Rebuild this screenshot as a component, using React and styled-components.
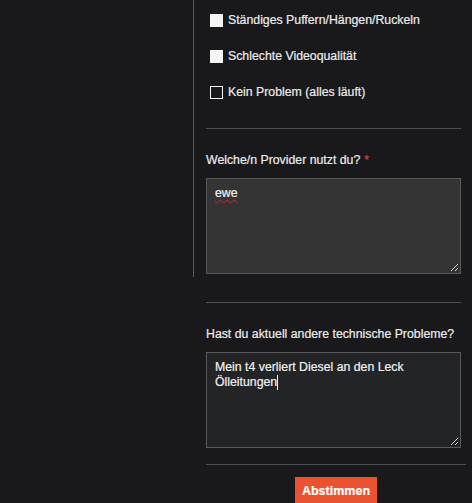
import React from "react"
import styled, { createGlobalStyle } from "styled-components"

const Global = createGlobalStyle`
  html, body {
    margin: 0;
    padding: 0;
    background: #19191b;
    height: 100%;
    overflow: hidden;
  }
  body {
    font-family: "Liberation Sans", Arial, sans-serif;
    font-size: 12.3px;
    color: #ececec;
    -webkit-text-stroke: 0.2px currentColor;
  }
`

const Page = styled.div`
  display: flex;
  align-items: flex-start;
  min-height: 503px;
`
const Sidebar = styled.div`
  width: 194px;
  height: 277px;
  box-sizing: border-box;
  border-right: 1px solid #5c5c5e;
  flex-shrink: 0;
`
const Main = styled.form`
  flex: 1;
  padding: 0 11px 0 12px;
  display: flex;
  flex-direction: column;
`
const Options = styled.div`
  padding-top: 2px;
  display: flex;
  flex-direction: column;
`
const Option = styled.label`
  display: flex;
  align-items: center;
  height: 36px;
  gap: 5px;
  padding-left: 4px;
  line-height: 15px;
`
const Box = styled.span`
  width: 13px;
  height: 13px;
  box-sizing: border-box;
  background: ${p => (p.checked ? "#f4f4f4" : "transparent")};
  border: 1px solid #f4f4f4;
  flex-shrink: 0;
`
const Divider = styled.hr`
  border: 0;
  height: 1px;
  background: #4e4e50;
  margin: ${p => p.top || 0}px ${p => p.right || 0}px 0 0;
`
const Label = styled.div`
  margin-top: 24px;
  line-height: 14px;
  white-space: nowrap;
`
const Star = styled.span`
  color: #d8473b;
  margin-left: 4px;
`
const Field = styled.div`
  position: relative;
  margin-top: 11px;
  height: 96px;
  box-sizing: border-box;
  border: 1px solid #59595b;
  background: ${p => (p.focused ? "#222426" : "#343434")};
  padding: 7px 8px;
  line-height: 15px;
  color: #f2f2f2;
`
const Misspelled = styled.span`
  text-decoration: underline wavy #c8293a;
  text-decoration-thickness: 1px;
  text-decoration-skip-ink: none;
  text-underline-offset: 2px;
`
const Caret = styled.span`
  display: inline-block;
  width: 1px;
  height: 15px;
  background: #f2f2f2;
  vertical-align: top;
`
const Grip = styled.svg`
  position: absolute;
  right: 1px;
  bottom: 1px;
`
const Actions = styled.div`
  display: flex;
  justify-content: center;
  margin-top: 12px;
`
const Button = styled.button`
  width: 82px;
  height: 30px;
  border: 0;
  background: #ea5230;
  color: #fff;
  font-family: "Liberation Sans", Arial, sans-serif;
  font-weight: bold;
  font-size: 12.5px;
  padding: 0 0 2px;
  margin-left: 5px;
`

const ResizeGrip = () => (
  <Grip width="9" height="9" viewBox="0 0 9 9">
    <path d="M8 1 L1 8 M8 5 L5 8" stroke="#c9c9c9" strokeWidth="1" />
  </Grip>
)

const options = [
  { text: "Ständiges Puffern/Hängen/Ruckeln", checked: true },
  { text: "Schlechte Videoqualität", checked: true },
  { text: "Kein Problem (alles läuft)", checked: false },
]

export default function App() {
  return (
    <>
      <Global />
      <Page>
        <Sidebar />
        <Main onSubmit={e => e.preventDefault()}>
          <Options>
            {options.map(o => (
              <Option key={o.text}>
                <Box checked={o.checked} />
                {o.text}
              </Option>
            ))}
          </Options>
          <Divider top={18} />
          <Label>
            Welche/n Provider nutzt du?<Star>*</Star>
          </Label>
          <Field>
            <Misspelled>ewe</Misspelled>
            <ResizeGrip />
          </Field>
          <Divider top={28} />
          <Label>Hast du aktuell andere technische Probleme?</Label>
          <Field focused>
            Mein t4 verliert Diesel an den Leck Ölleitungen<Caret />
            <ResizeGrip />
          </Field>
          <Divider top={16} right={-5} />
          <Actions>
            <Button type="submit">Abstimmen</Button>
          </Actions>
        </Main>
      </Page>
    </>
  )
}
